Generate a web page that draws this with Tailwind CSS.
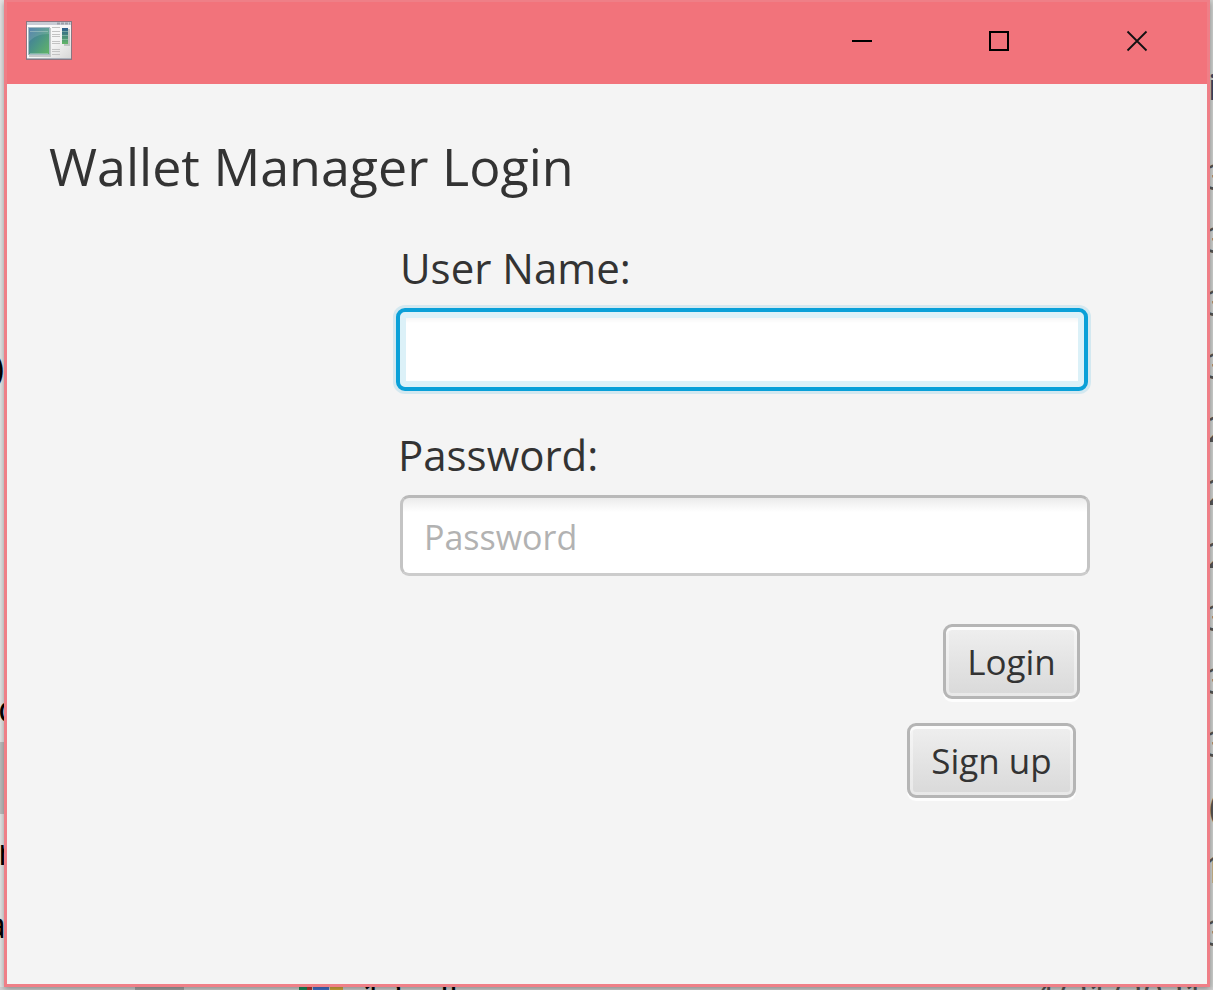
<!DOCTYPE html>
<html lang="en">
<head>
<meta charset="utf-8">
<title>Wallet Manager Login</title>
<script src="https://cdn.jsdelivr.net/npm/@tailwindcss/browser@4"></script>
</head>
<body class="relative flex min-h-screen flex-col overflow-hidden bg-[#f0f0f0] font-['Open_Sans','Noto_Sans',sans-serif] text-[#333]">

<!-- Desktop behind the window -->
<div class="absolute inset-0 overflow-hidden text-4xl text-black" aria-hidden="true">
  <div class="absolute inset-y-0 left-0 w-1 bg-[#e4e4e4]">
    <span class="absolute right-0 top-[348px]">)</span>
    <span class="absolute left-[-2px] top-[689px]">c</span>
    <div class="absolute left-0 top-[742px] h-18 w-1 bg-[#bdbdbd]"></div>
    <span class="absolute left-[-2px] top-[832px]">r</span>
    <span class="absolute right-[-2px] top-[905px]">a</span>
  </div>
  <div class="absolute inset-y-0 right-0 w-[3px] overflow-hidden bg-[#cfd1cf] pt-[55px] leading-[63px] text-[#555]">
    <div class="-ml-[2px] text-[#3c4660]">i</div>
    <div class="-ml-[3px] mt-[27px]">3</div><div class="-ml-[3px]">3</div><div class="-ml-[3px]">3</div><div class="-ml-[3px]">3</div>
    <div class="-ml-[3px]">2</div><div class="-ml-[3px]">2</div><div class="-ml-[3px]">2</div>
    <div class="-ml-[3px]">3</div><div class="-ml-[3px]">3</div><div class="-ml-[3px]">3</div>
    <div class="-ml-px">(</div><div class="-ml-[7px]">1</div><div class="-ml-[3px]">3</div>
  </div>
  <div class="absolute inset-x-0 bottom-0 h-[3px] overflow-hidden bg-[#d2d2d2]">
    <div class="absolute left-[135px] top-0 h-1 w-[49px] bg-[#a6a6a6]"></div>
    <div class="absolute left-[299px] top-0 h-1 w-[13px] bg-[linear-gradient(90deg,#1d8e5a_60%,#b83a35_60%)]"></div>
    <div class="absolute left-[313px] top-0 h-1 w-4 bg-[#4472cb]"></div>
    <div class="absolute left-[330px] top-0 h-1 w-[13px] bg-[#d6aa3c]"></div>
    <span class="absolute left-[362px] top-[-12px]">12</span>
    <span class="absolute left-[440px] top-[-12px]">ll</span>
    <span class="absolute left-[1034px] top-[-12px] text-[#555]">4/21/2021 1</span>
  </div>
</div>

<main class="relative mr-[3px] mb-[3px] ml-1 flex grow flex-col border-3 border-t-2 border-[#ef7f87] bg-[#f4f4f4] shadow-[0_2px_6px_rgba(0,0,0,0.35)]">
  <header class="flex h-[82px] items-center bg-[#f2737b] pb-1 pl-[19px]">
    <svg class="h-10 w-12" viewBox="0 0 48 40" aria-hidden="true">
      <defs>
        <linearGradient id="pane" x1="0" y1="0" x2="1" y2="1"><stop offset="0" stop-color="#4173a4"/><stop offset=".5" stop-color="#4b9587"/><stop offset="1" stop-color="#62b566"/></linearGradient>
        <linearGradient id="sheet" x1="0" y1="0" x2="1" y2="1"><stop offset="0" stop-color="#fff"/><stop offset=".6" stop-color="#f4f4f4"/><stop offset="1" stop-color="#d5d5d5"/></linearGradient>
        <linearGradient id="strip" x1="0" y1="0" x2="0" y2="1"><stop offset="0" stop-color="#2c5c8d"/><stop offset="1" stop-color="#63b768"/></linearGradient>
      </defs>
      <rect x="0.5" y="0.5" width="45" height="38" fill="url(#sheet)" stroke="#8c7580"/>
      <rect x="1" y="1" width="44" height="3" fill="#c8ccd5"/>
      <path d="M31 2.500h13" stroke="#9b9ea8" stroke-width="2" stroke-dasharray="3 1"/>
      <path d="M1 37.500h44" stroke="#aab0bb"/>
      <rect x="3" y="7" width="22" height="29" fill="#c4c9c9"/>
      <rect x="2" y="6" width="22" height="28" fill="#a6bcc4"/>
      <rect x="3" y="7" width="20" height="26" fill="url(#pane)"/>
      <path d="M3 7h20v6C13 13 7 16 3 21z" fill="#fff" opacity=".13"/>
      <path d="M4 10.500h18M4 32.500h18" stroke="#b4d0cb" opacity=".5"/>
      <path d="M26 6.500h8M26 10.500h8M26 13.500h8M26 15.500h8M26 20.500h8M26 22.500h8M26 28.500h8M26 30.500h8M26 33.500h8" stroke="#c3c3c3"/>
      <rect x="38" y="8" width="6" height="17" fill="#c0c5c3"/>
      <rect x="36" y="7" width="6" height="16" fill="url(#strip)"/>
      <path d="M36 10.500h6M36 14.500h6M36 18.500h6" stroke="#9bc8b6" opacity=".6"/>
    </svg>
    <div class="mr-px ml-auto flex h-full text-black">
      <button type="button" aria-label="Minimize" class="flex h-full w-[137px] items-center justify-center"><svg class="size-6" viewBox="0 0 24 24"><path d="M2 12h20" stroke="currentColor" stroke-width="2"/></svg></button>
      <button type="button" aria-label="Maximize" class="flex h-full w-[137px] items-center justify-center"><svg class="size-6" viewBox="0 0 24 24"><path d="M3 3h18v18H3z" fill="none" stroke="currentColor" stroke-width="2"/></svg></button>
      <button type="button" aria-label="Close" class="flex h-full w-[139px] items-center justify-center"><svg class="size-6" viewBox="0 0 24 24"><path d="M2.500 2.500l19 19M21.500 2.500l-19 19" stroke="#111" stroke-width="1.800"/></svg></button>
    </div>
  </header>

  <h1 class="mt-[46px] ml-[42px] text-[52px] leading-[72px]">Wallet Manager Login</h1>

  <form class="mt-9 mr-[117px] ml-[389px] flex flex-col">
    <label for="user" class="ml-1 text-[42px] leading-[60px]">User Name:</label>
    <input id="user" type="text" class="mt-[10px] mr-[2px] h-[83px] rounded-[9px] border-4 border-[#0aa0d8] bg-white px-5 text-4xl shadow-[0_0_0_3px_#d3e8f0,inset_0_0_0_6px_#dcf1f8,inset_0_9px_4px_-1px_#f4f4f4] outline-none">
    <label for="pass" class="mt-[34px] ml-[2px] text-[42px] leading-[60px]">Password:</label>
    <input id="pass" type="password" placeholder="Password" class="mt-[10px] ml-1 h-[81px] rounded-[9px] border-3 border-[#c4c4c4] border-t-[#b9b9b9] border-b-[#cccccc] bg-white bg-[linear-gradient(#ebebeb,#fff_14px)] px-[21px] pt-[2px] text-[34px] outline-none placeholder:text-[#b2b2b2]">
    <div class="mt-12 flex flex-col items-end gap-6">
      <button type="submit" class="mr-[10px] h-[75px] w-[137px] rounded-[9px] border-3 border-[#b5b5b5] bg-linear-to-b from-[#efefef] to-[#d9d9d9] pt-[2px] text-[35px] shadow-[0_3px_0_#fdfdfd,inset_0_3px_0_#fcfcfc,inset_0_0_0_3px_rgba(255,255,255,0.4)]">Login</button>
      <button type="button" class="mr-[14px] h-[75px] w-[169px] rounded-[9px] border-3 border-[#b5b5b5] bg-linear-to-b from-[#efefef] to-[#d9d9d9] pt-[2px] text-[35px] shadow-[0_3px_0_#fdfdfd,inset_0_3px_0_#fcfcfc,inset_0_0_0_3px_rgba(255,255,255,0.4)]">Sign up</button>
    </div>
  </form>
</main>
</body>
</html>
